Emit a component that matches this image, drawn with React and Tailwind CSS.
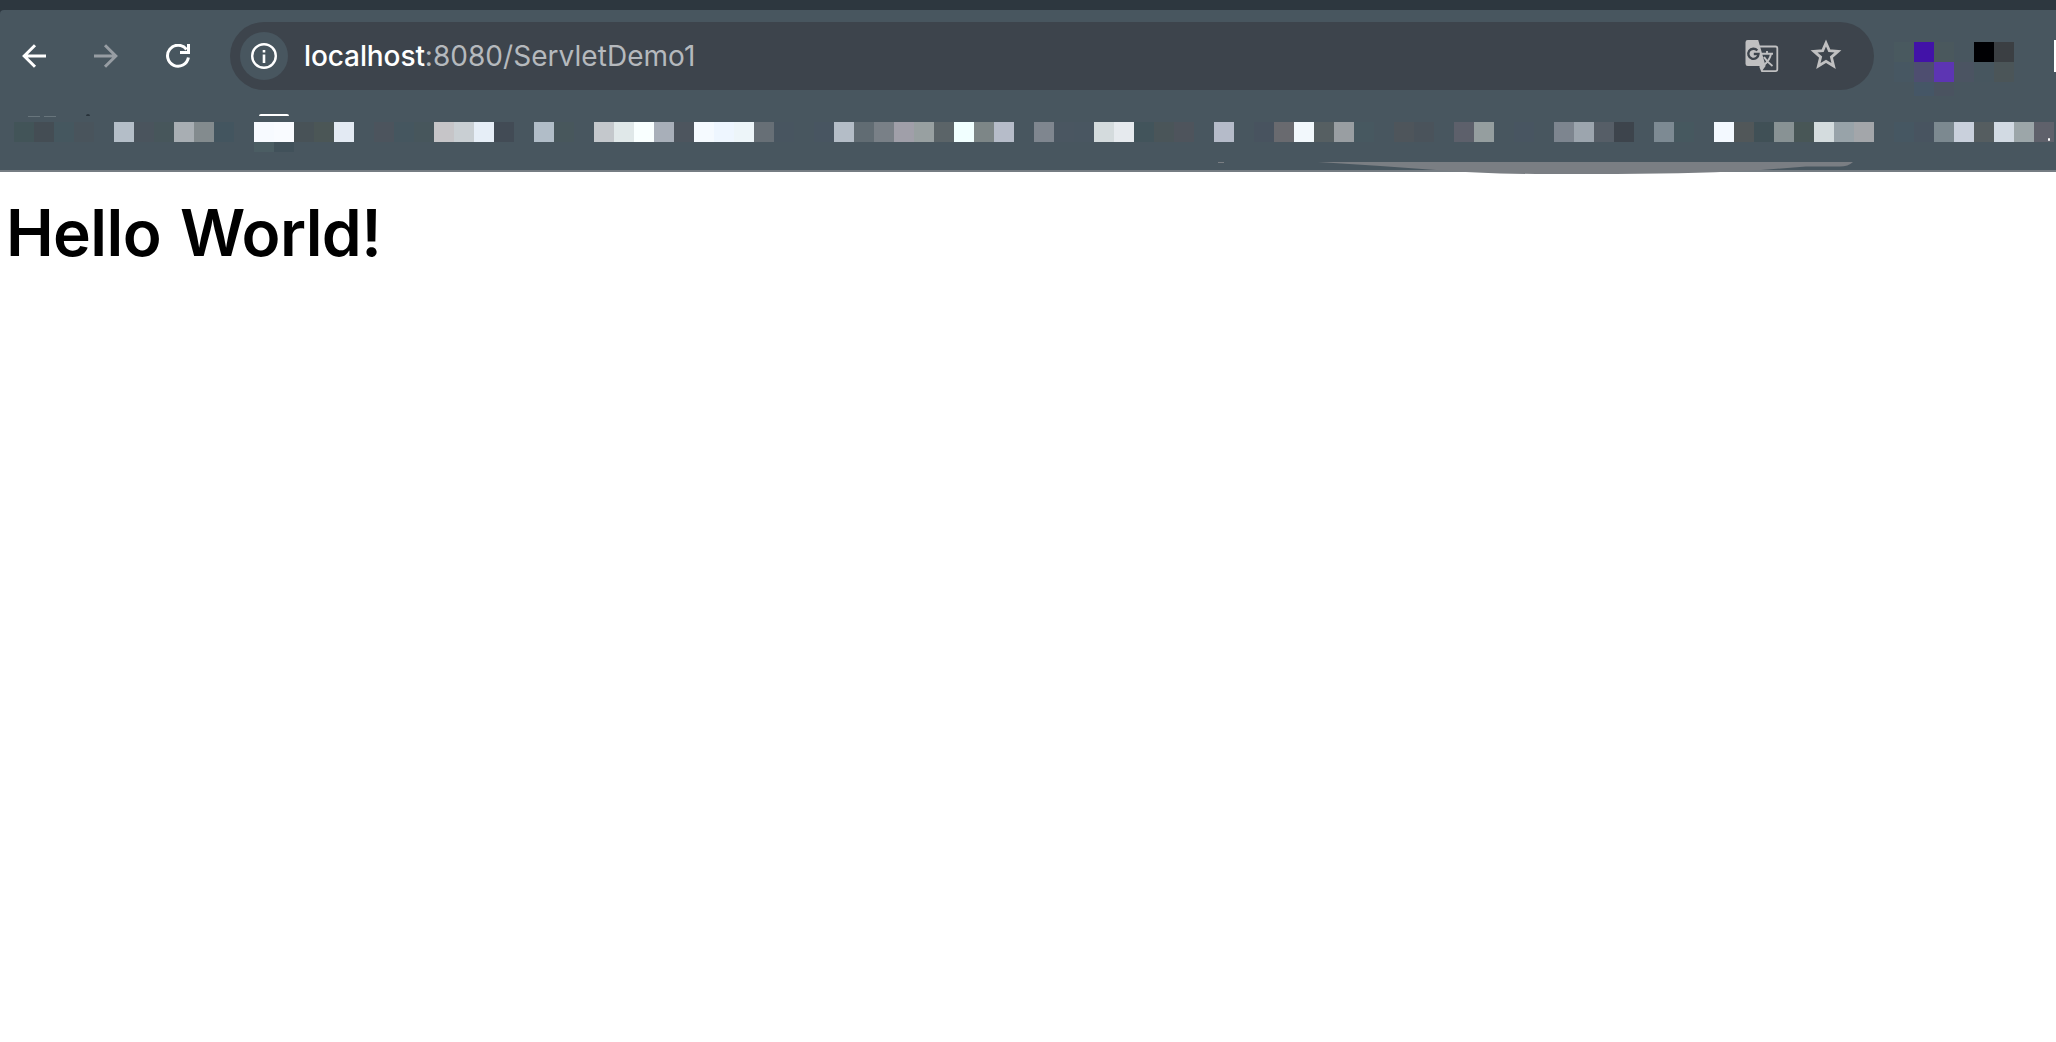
const BOOKMARKS = [
  '#425458', '#444d54', '#45575f', '#49545c', '', '#b4bec8', '#4a545d', '#47565b', '#a8aeb3', '#838b8e',
  '#43555f', '', '#f7faff', '#f9fbff', '#485257', '#4b5656', '#e3eaf3', '', '#4c545d', '#45565f',
  '#47565c', '#c6c5c8', '#c9cfd3', '#e6eef7', '#424b55', '', '#b1bdc8', '#48575c', '', '#c4c8cc',
  '#e0e8e9', '#f9ffff', '#a8afb9', '#4d555e', '#f5faff', '#eef6ff', '#edf5f9', '#676f76', '#485560', '',
  '#485561', '#b4bdc7', '#616c73', '#798087', '#a09fa9', '#98a0a1', '#5b6468', '#f1ffff', '#7d8687', '#b6bcc9',
  '', '#7f868f', '#4a5661', '#495661', '#d4dbdd', '#e6eaee', '#42545b', '#4a5559', '#4e545c', '',
  '#b5bbc9', '', '#48535f', '#696a6f', '#f2f8fc', '#565f62', '#999ea2', '#475860', '', '#4e555b',
  '#4a535b', '', '#5d606b', '#959e9f', '', '#485561', '', '#7d858f', '#9ca5ae', '#565e67',
  '#3d444c', '', '#7d8a93', '#46585f', '', '#f3f9ff', '#515759', '#405056', '#889294', '#485656',
  '#d4dcde', '#98a3a9', '#a3a6aa', '', '#465762', '#485460', '#7c8990', '#c9d0dc', '#555d60', '#d2dae3',
  '#9ca6a9', '#5f616b',
];

const EXTENSIONS = [
  '#49595f', '#4212a8', '#4a585d', '', '#000003', '#3b3f43',
  '#475762', '#4e4e70', '#5d35b3', '#4b5462', '#47565f', '#4b5558',
  '', '#455666', '#4a5360', '', '', '',
];

function Cell({ color }) {
  return <span className="size-5 shrink-0" style={{ backgroundColor: color || 'transparent' }} />;
}

function Back({ className }) {
  return (
    <svg className={className} viewBox="0 0 24 24" fill="none" stroke="currentColor" strokeWidth="3">
      <path d="M24 12H2.5M13 1.2 2.2 12 13 22.8" />
    </svg>
  );
}

function Reload() {
  return (
    <svg className="size-6 text-white" viewBox="0 0 24 24" fill="none" stroke="currentColor" strokeWidth="3">
      <path d="M20.5 5.5A10.5 10.5 0 1 0 22.4 13.5" />
      <path d="M14 8.5h8.500V0" />
    </svg>
  );
}

function Info() {
  return (
    <svg className="size-[26px] text-white" viewBox="0 0 26 26" fill="none" stroke="currentColor">
      <circle cx="13" cy="13" r="11.8" strokeWidth="2.4" />
      <path d="M13 11.5V20M13 7v2.6" strokeWidth="2.6" />
    </svg>
  );
}

function Translate() {
  return (
    <svg className="h-[34px] w-[34px]" viewBox="0 0 34 34" fill="none">
      <path d="M14 7.5h16.5a1.8 1.8 0 0 1 1.8 1.8v21a1.8 1.8 0 0 1-1.8 1.8H17l-2-5" stroke="#c0c0c1" strokeWidth="1.8" />
      <path d="M2.8 1h10.4l1.6 5.5 5.8 20.5-3.6 5-1.8-5H2.8A2.3 2.3 0 0 1 .5 24.7V3.3A2.3 2.3 0 0 1 2.8 1Z" fill="#c0c0c1" />
      <path d="M12.3 11.5A5.1 5.1 0 1 0 13.500 15H8.800" stroke="#3d444c" strokeWidth="2.4" />
      <path d="M17 14.8h11M22 12v3M26 15c-1 5-4 8.500-7 11M19 18c2 3.500 5 6.500 8.500 9" stroke="#c0c0c1" strokeWidth="1.9" />
    </svg>
  );
}

function Star() {
  return (
    <svg className="-mt-1 h-[30px] w-8" viewBox="0 0 32 30" fill="none" stroke="#c0c0c1" strokeWidth="2.8">
      <path d="M16 4 19.3 11.6 28 12.300 21.400 18.100 23.600 27 16 22.300 8.400 27 10.600 18.100 4 12.300 12.700 11.600Z" />
    </svg>
  );
}

function Toolbar() {
  return (
    <div className="flex h-[92px] items-start overflow-hidden">
      <div className="flex w-[230px] shrink-0 items-center gap-12 pt-[34px] pl-[22px]">
        <Back className="size-6 text-white" />
        <Back className="size-6 rotate-180 text-[#979da3]" />
        <Reload />
      </div>
      <div className="mt-3 flex h-[68px] w-[1644px] shrink-0 items-center rounded-full bg-[#3d444c] pl-2.5">
        <div className="flex size-12 items-center justify-center rounded-full bg-[#48565f]">
          <Info />
        </div>
        <div className="ml-4 grow text-[28px] leading-none tracking-[0.04px] whitespace-nowrap text-[#b5b9bd]">
          <span className="font-medium tracking-[-0.1px] text-white">localhost</span>:8080/ServletDemo1
        </div>
        <div className="flex items-center gap-[31px] pr-8">
          <Translate />
          <Star />
        </div>
      </div>
      <div className="mt-8 ml-5 grid h-[54px] w-[120px] shrink-0 grid-cols-6 overflow-hidden">
        {EXTENSIONS.map((color, i) => <Cell key={i} color={color} />)}
      </div>
      <div className="mt-[30px] ml-10 h-8 w-0.5 shrink-0 bg-white" />
    </div>
  );
}

function BookmarkBar() {
  return (
    <div className="relative h-[70px] overflow-hidden border-b-2 border-[#767d83] pt-5 pl-3.5">
      <div className="flex">
        {BOOKMARKS.map((color, i) => <Cell key={i} color={color} />)}
      </div>
      <div className="ml-60 flex">
        <span className="h-2.5 w-5 bg-[#4b5d63]" />
        <span className="h-2.5 w-5 bg-[#41515a]" />
      </div>
      <span className="absolute top-3.5 left-7 h-px w-3 bg-[#68757c]" />
      <span className="absolute top-3.5 left-11 h-px w-3 bg-[#68757c]" />
      <span className="absolute top-3 left-[86px] h-0.5 w-1 rounded-t-full bg-[#29333b]" />
      <span className="absolute top-3 left-[259px] h-0.5 w-[30px] rounded-t-full bg-white" />
      <span className="absolute top-[36px] left-[2048px] h-[3px] w-0.5 rounded-full bg-white" />
    </div>
  );
}

export default function App() {
  return (
    <div className="h-[1042px] w-[2056px] overflow-hidden bg-white font-['Inter','Liberation_Sans',sans-serif]">
      <header className="relative bg-[#2d373f] pt-2.5">
        <div className="rounded-tl-[4px] bg-[#48565f]">
          <Toolbar />
          <BookmarkBar />
        </div>
        <svg className="absolute top-[162px] left-[1216px] h-3 w-[640px]" viewBox="0 0 640 12">
          <path d="M2 0h6v1H2ZM102 0H637Q632 4.500 624 4.500H590L545 8Q490 11.500 400 12H320Q260 11.500 220 8Q160 3.500 102 0Z" fill="#7a7e83" />
        </svg>
      </header>
      <main className="pt-[21px] pl-1.5">
        <h1 className="text-[64px] leading-[80px] font-semibold tracking-[-0.6px] text-black [word-spacing:3.5px]">Hello World!</h1>
      </main>
    </div>
  );
}
